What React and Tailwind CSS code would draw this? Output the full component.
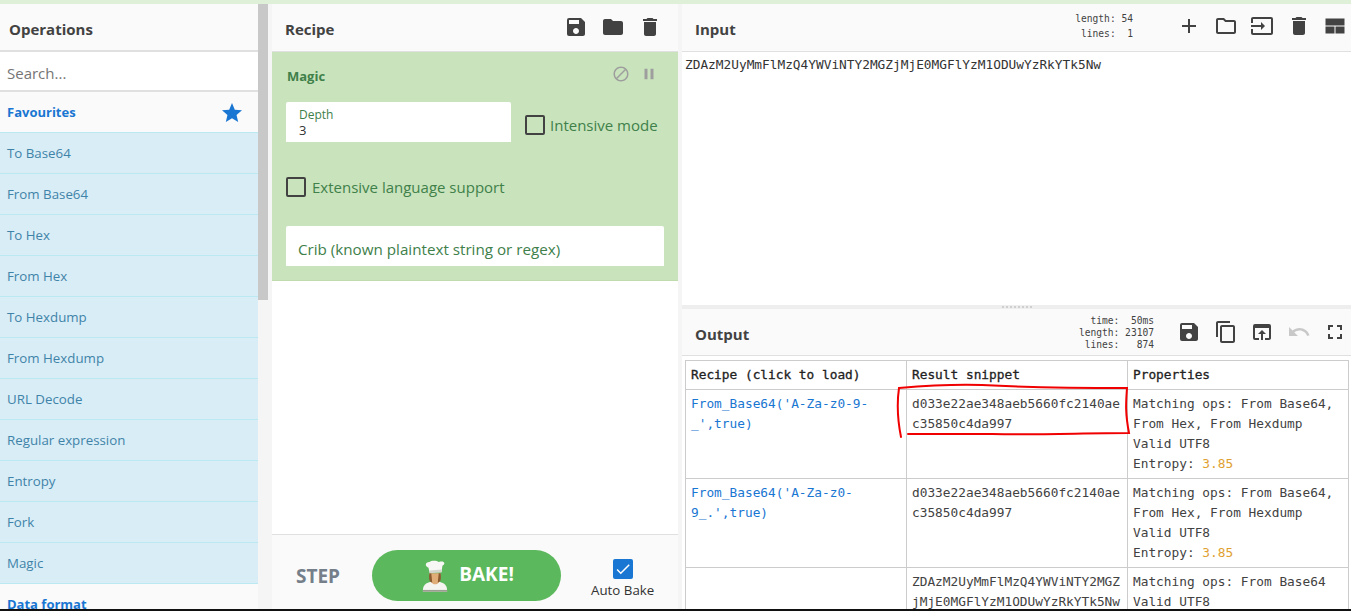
import React from "react";
import {
  MdSave,
  MdFolder,
  MdDelete,
  MdAdd,
  MdInput,
  MdContentCopy,
  MdOpenInBrowser,
  MdUndo,
  MdFullscreen,
  MdBlock,
  MdPause,
  MdStar,
  MdCheck,
  MdOutlineFolder,
} from "react-icons/md";

const favourites = [
  "To Base64",
  "From Base64",
  "To Hex",
  "From Hex",
  "To Hexdump",
  "From Hexdump",
  "URL Decode",
  "Regular expression",
  "Entropy",
  "Fork",
  "Magic",
];

const rows = [
  {
    recipe: "From_Base64('A-Za-z0-9-_',true)",
    snippet: "d033e22ae348aeb5660fc2140aec35850c4da997",
    props: ["Matching ops: From Base64, From Hex, From Hexdump", "Valid UTF8"],
    entropy: "3.85",
  },
  {
    recipe: "From_Base64('A-Za-z0-9_.',true)",
    snippet: "d033e22ae348aeb5660fc2140aec35850c4da997",
    props: ["Matching ops: From Base64, From Hex, From Hexdump", "Valid UTF8"],
    entropy: "3.85",
  },
  {
    recipe: "",
    snippet: "ZDAzM2UyMmFlMzQ4YWViNTY2MGZjMjE0MGFlYzM1ODUwYzRkYTk5Nw",
    props: ["Matching ops: From Base64", "Valid UTF8"],
  },
];

const Checkbox = () => (
  <span className="block w-5 h-5 shrink-0 rounded-[2px] border-2 border-[#424242]" />
);

const ChefIcon = () => (
  <svg width="26" height="32" viewBox="0 0 28 34" className="shrink-0">
    <path d="M1 32 C1 26 6 23 14 23 C22 23 27 26 27 32 L27 34 L1 34 Z" fill="#f4f4f0" />
    <path d="M1 32 L27 32 L27 34 L1 34 Z" fill="#9aa08f" />
    <path d="M8 14 C8 23 11 26 14 26 C18 26 20 23 20 14 Z" fill="#e0ad78" />
    <path d="M8 14 C7 20 8 24 11 24 L10 14 Z M20 14 C21 20 20 24 17 24 L18 14 Z" fill="#8a5a30" />
    <path d="M7 8 C3 7 3 2 8 2 C10 0 16 0 18 2 C24 0 26 4 22 6 L21 13 L8 13 Z" fill="#f7f7f5" />
    <path d="M8 11 L21 10 L21 13 L8 14 Z" fill="#d5d5d0" />
  </svg>
);

const LayoutIcon = () => (
  <svg width="24" height="24" viewBox="0 0 24 24" fill="currentColor">
    <rect x="2.5" y="4.5" width="19" height="7" />
    <rect x="2.5" y="12.5" width="9" height="7" />
    <rect x="12.5" y="12.5" width="9" height="7" />
  </svg>
);

const App = () => {
  return (
    <div className="h-[611px] w-[1351px] flex flex-col overflow-hidden bg-white text-[#424242] font-['Open_Sans','Noto_Sans',sans-serif]">
      <div className="h-1 shrink-0 bg-[#dff0d8]" />
      <div className="flex-1 min-h-0 flex">
        {/* Operations */}
        <div className="w-[258px] shrink-0 flex flex-col overflow-hidden bg-[#fafafa]">
          <div className="h-[48px] shrink-0 flex items-center pl-[9px] pt-[5px] border-b-2 border-[#e0e0e0] text-[15px] font-bold">
            Operations
          </div>
          <div className="h-[38px] shrink-0 bg-white flex items-center pl-[7px] pt-[5px] text-[15px] text-[#757575]">
            Search...
          </div>
          <div className="h-[42px] shrink-0 flex items-center justify-between pl-[7px] pr-[14px] pt-[2px] border-t-2 border-[#e0e0e0] text-[13px] font-bold text-[#1976d2]">
            <span>Favourites</span>
            <MdStar size={24} />
          </div>
          {favourites.map((name) => (
            <div
              key={name}
              className="h-[41px] shrink-0 flex items-center pl-[7px] pt-[2px] border-t border-[#bce8f1] bg-[#d9edf7] text-[13.3px] text-[#3f84a8]"
            >
              {name}
            </div>
          ))}
          <div className="h-[41px] shrink-0 flex items-center pl-[7px] pt-[2px] border-t border-[#bce8f1] text-[13px] font-bold text-[#1976d2]">
            Data format
          </div>
        </div>
        <div className="w-[10px] shrink-0 bg-[#f5f5f5]">
          <div className="h-[296px] bg-[#c8c8c8]" />
        </div>

        {/* gutter */}
        <div className="w-[4px] shrink-0 bg-[#f5f5f5]" />

        {/* Recipe */}
        <div className="w-[406px] shrink-0 flex flex-col">
          <div className="h-[48px] shrink-0 flex items-center justify-between pl-[13px] pr-[16px] bg-[#fafafa] border-b border-[#e0e0e0]">
            <span className="text-[15px] font-bold pt-[3px]">Recipe</span>
            <div className="flex items-center gap-[13px] text-[#424242] -mt-[2px]">
              <MdSave size={24} />
              <MdFolder size={24} />
              <MdDelete size={24} />
            </div>
          </div>
          <div className="h-[229px] shrink-0 bg-[#c9e4bc] border-b border-[#bedcae] text-[#40804a] pl-[14px] pr-[14px] relative">
            <div className="flex items-center justify-between h-[48px] pr-[6px]">
              <span className="text-[13px] font-bold pl-px pt-[2px]">Magic</span>
              <div className="flex items-center gap-[10px] text-[#9e9e9e] -mt-[5px]">
                <MdBlock size={18} />
                <MdPause size={18} />
              </div>
            </div>
            <div className="flex items-center mt-[2px]">
              <div className="w-[225px] h-[40px] bg-white rounded-t-[2px] pl-[13px] pt-[5px] leading-none">
                <div className="text-[12px] leading-[15px]">Depth</div>
                <div className="text-[13px] leading-[16px] text-[#333]">3</div>
              </div>
              <div className="ml-[14px] mt-[6px] flex items-center gap-[5px]">
                <Checkbox />
                <span className="text-[15px]">Intensive mode</span>
              </div>
            </div>
            <div className="flex items-center gap-[6px] mt-[35px] h-[20px]">
              <Checkbox />
              <span className="text-[15px]">Extensive language support</span>
            </div>
            <div className="h-[40px] mt-[29px] bg-white rounded-t-[2px] flex items-center pl-[12px] pt-[6px] text-[15.2px]">
              Crib (known plaintext string or regex)
            </div>
          </div>
          <div className="flex-1 bg-white" />
          <div className="h-[75px] shrink-0 border-t border-[#e0e0e0] bg-[#fafafa] flex items-start relative">
            <span className="ml-[24px] mt-[29px] text-[19px] leading-[24px] font-bold text-[#757f8a]">STEP</span>
            <div className="ml-[32px] mt-[15px] w-[189px] h-[51px] rounded-full bg-[#5cb85c] flex items-center justify-center gap-[11px] pl-[3px] text-white text-[19px] font-bold">
              <ChefIcon />
              <span className="-mt-[3px]">BAKE!</span>
            </div>
            <div className="ml-[30px] mt-[24px] flex flex-col items-center">
              <div className="w-5 h-5 rounded-[2px] bg-[#1976d2] flex items-center justify-center text-white">
                <MdCheck size={18} />
              </div>
              <span className="text-[13.3px] leading-[18px] mt-[2px] text-[#333]">Auto Bake</span>
            </div>
          </div>
        </div>

        {/* gutter */}
        <div className="w-[4px] shrink-0 bg-[#f5f5f5]" />

        {/* Input and output */}
        <div className="flex-1 min-w-0 flex flex-col">
          <div className="h-[48px] shrink-0 flex items-center justify-between pl-[13px] pr-[4px] bg-[#fafafa] border-b border-[#e0e0e0]">
            <span className="text-[15px] font-bold pt-[3px]">Input</span>
            <div className="flex items-center">
              <div className="font-['DejaVu_Sans_Mono',monospace] text-[9.6px] leading-[14.5px] text-right whitespace-pre mr-[44px] -mt-[2px]">
                <div>length: 54</div>
                <div>lines:  1</div>
              </div>
              <div className="flex items-center gap-[12.5px] -mt-[4px]">
                <MdAdd size={24} />
                <MdOutlineFolder size={24} />
                <MdInput size={24} />
                <MdDelete size={24} />
                <LayoutIcon />
              </div>
            </div>
          </div>
          <div className="h-[253px] shrink-0 pl-[3px] pt-[5px] font-['DejaVu_Sans_Mono',monospace] text-[12.8px] leading-[16px] text-[#333]">
            ZDAzM2UyMmFlMzQ4YWViNTY2MGZjMjE0MGFlYzM1ODUwYzRkYTk5Nw
          </div>
          <div className="h-[4px] shrink-0 bg-[#eeeeee] flex items-center justify-center">
            <div className="w-[30px] h-[2px] border-t-2 border-dotted border-[#cfcfcf]" />
          </div>
          <div className="h-[47px] shrink-0 flex items-center justify-between pl-[13px] pr-[4px] bg-[#fafafa] border-b border-[#e0e0e0]">
            <span className="text-[15px] font-bold pt-[4px]">Output</span>
            <div className="flex items-center">
              <div className="font-['DejaVu_Sans_Mono',monospace] text-[9.6px] leading-[12px] text-right whitespace-pre mr-[23px] mt-[1px]">
                <div>time:  50ms</div>
                <div>length: 23107</div>
                <div>lines:   874</div>
              </div>
              <div className="flex items-center gap-[12.5px]">
                <MdSave size={24} />
                <MdContentCopy size={24} />
                <MdOpenInBrowser size={24} />
                <MdUndo size={24} className="text-[#c8c8c8]" />
                <MdFullscreen size={24} />
              </div>
            </div>
          </div>
          <div className="flex-1 min-h-0 overflow-hidden pl-[3px] pr-[2px] pt-[4px] relative">
            <table className="w-[664px] table-fixed border-collapse font-['DejaVu_Sans_Mono',monospace] text-[12.8px] leading-[20px] text-[#424242]">
              <thead>
                <tr className="h-[29px]">
                  <th className="w-[221px] border border-[#cccccc] px-[5px] text-left font-normal text-[#222] [-webkit-text-stroke:0.3px_#222]">Recipe (click to load)</th>
                  <th className="w-[221px] border border-[#cccccc] px-[5px] text-left font-normal text-[#222] [-webkit-text-stroke:0.3px_#222]">Result snippet</th>
                  <th className="border border-[#cccccc] px-[5px] text-left font-normal text-[#222] [-webkit-text-stroke:0.3px_#222]">Properties</th>
                </tr>
              </thead>
              <tbody>
                {rows.map((row) => (
                  <tr key={row.snippet + row.recipe} className="align-top">
                    <td className="border border-[#cccccc] px-[5px] pt-[4px] pb-[4px] text-[#1976d2]">{row.recipe}</td>
                    <td className="border border-[#cccccc] px-[5px] pt-[4px] pb-[4px] break-all">{row.snippet}</td>
                    <td className="border border-[#cccccc] px-[5px] pt-[4px] pb-[4px]">
                      {row.props.map((p) => (
                        <div key={p}>{p}</div>
                      ))}
                      {row.entropy && (
                        <div>
                          Entropy: <span className="text-[#e0a030]">{row.entropy}</span>
                        </div>
                      )}
                    </td>
                  </tr>
                ))}
              </tbody>
            </table>
            {/* hand drawn annotation over the result */}
            <svg className="absolute left-[210px] top-[26px] pointer-events-none" width="245" height="60" viewBox="0 0 245 60" fill="none">
              <path
                d="M9 55 C6 40 5 20 7 6 C30 4 60 2 90 3 C130 5 200 6 235 6 C234 20 233 30 237 51 C190 51 150 53 100 52 C70 52 40 52 16 52"
                stroke="#f00000"
                strokeWidth="2"
                strokeLinecap="round"
              />
            </svg>
          </div>
        </div>
      </div>
      <div className="h-[2px] shrink-0 bg-[#111]" />
    </div>
  );
};

export default App;
